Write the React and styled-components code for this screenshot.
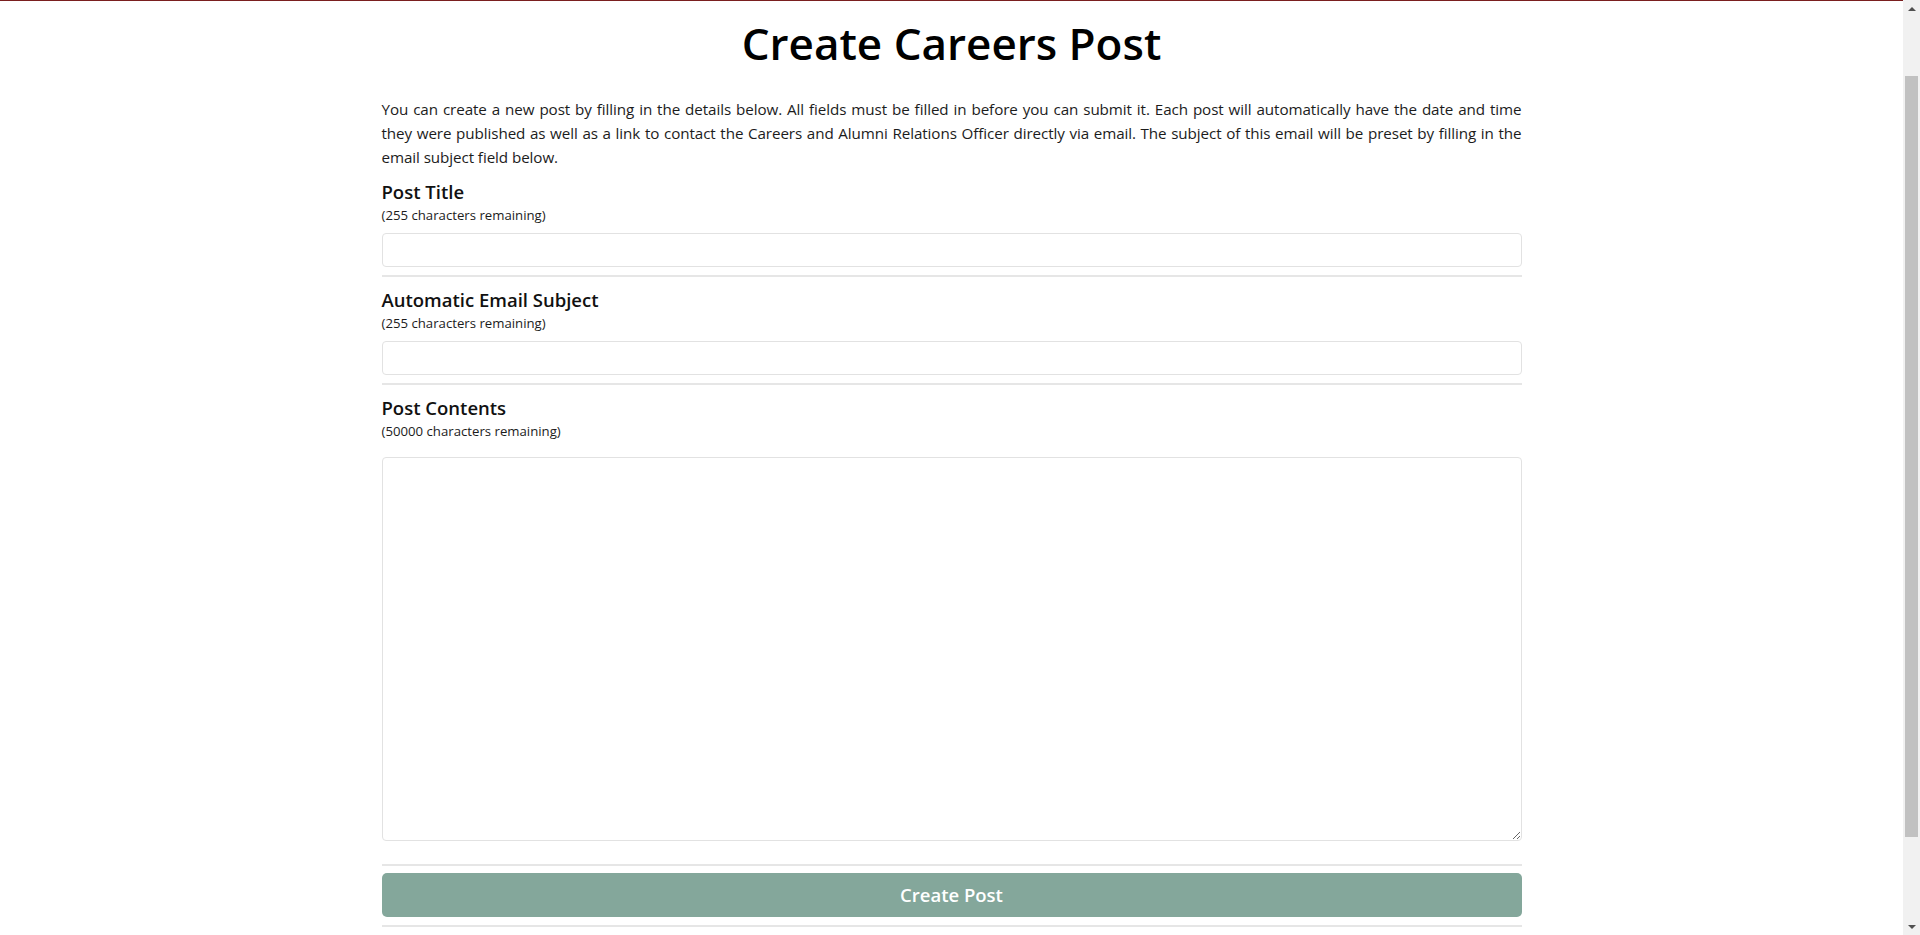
import React from "react";
import styled, { createGlobalStyle } from "styled-components";

const GlobalStyle = createGlobalStyle`
  html, body { margin: 0; padding: 0; background: #ffffff; }
  body {
    margin-right: 17px;
    font-family: "Open Sans", "Noto Sans", "Liberation Sans", sans-serif;
    color: #212529;
  }
  *, *::before, *::after { box-sizing: border-box; }
`;

const NavEdge = styled.div`
  height: 1px;
  background: #7a1f1f;
`;

const Container = styled.main`
  width: 1140px;
  margin: 0 auto;
  padding-bottom: 108px;
  display: flex;
  flex-direction: column;
`;

const Title = styled.h1`
  margin: 16px 0 0;
  font-size: 44px;
  line-height: 1.2;
  font-weight: 600;
  color: #000;
  text-align: center;
`;

const Intro = styled.p`
  margin: 27px 0 0;
  font-size: 15.2px;
  letter-spacing: -0.08px;
  line-height: 24px;
  text-align: justify;
  color: #1c1c1c;
`;

const Section = styled.section`
  display: flex;
  flex-direction: column;
  padding-top: 12px;
`;

const Label = styled.label`
  font-size: 18.5px;
  line-height: 1.2;
  font-weight: 600;
  color: #111;
`;

const Hint = styled.small`
  margin-top: 3px;
  font-size: 13.2px;
  line-height: 1.5;
  color: #1c1c1c;
`;

const TextInput = styled.input`
  margin-top: 7px;
  height: 34px;
  width: 100%;
  border: 1px solid #e2e2e2;
  border-radius: 4px;
  padding: 4px 10px;
  font-family: inherit;
  font-size: 15px;
  outline: none;
`;

const TextArea = styled.textarea`
  display: block;
  margin-top: 15px;
  height: 384px;
  width: 100%;
  border: 1px solid #e2e2e2;
  border-radius: 4px;
  padding: 6px 10px;
  font-family: inherit;
  font-size: 15px;
  outline: none;
`;

const Divider = styled.hr`
  margin: ${(p) => p.$top || 8}px 0 0;
  height: 2px;
  border: none;
  background: #e6e6e6;
`;

const SubmitButton = styled.button`
  margin-top: 7px;
  height: 44px;
  width: 100%;
  border: none;
  border-radius: 5px;
  background: #84a79b;
  color: #fff;
  font-family: inherit;
  font-size: 18.5px;
  font-weight: 600;
  cursor: pointer;
`;

/* Window scrollbar (classic style), drawn over the page's right edge */
const ScrollTrack = styled.div`
  position: fixed;
  top: 0;
  right: 0;
  width: 17px;
  height: 100vh;
  background: #f1f1f1;
  display: flex;
  flex-direction: column;
  align-items: center;
`;

const ScrollArrow = styled.div`
  height: 17px;
  width: 100%;
  display: flex;
  align-items: center;
  justify-content: center;
  &::before {
    content: "";
    border-left: 4px solid transparent;
    border-right: 4px solid transparent;
    ${(p) =>
      p.$down
        ? "border-top: 4px solid #505050;"
        : "border-bottom: 4px solid #505050;"}
  }
`;

const ScrollSpace = styled.div`
  flex: 1;
  width: 100%;
  display: flex;
  justify-content: center;
  padding-top: 59px;
  padding-bottom: 81px;
`;

const ScrollThumb = styled.div`
  width: 13px;
  height: 100%;
  background: #c1c1c1;
`;

const fields = [
  { id: "title", label: "Post Title", remaining: 255 },
  { id: "subject", label: "Automatic Email Subject", remaining: 255 },
];

export default function App() {
  return (
    <>
      <GlobalStyle />
      <NavEdge />
      <Container>
        <Title>Create Careers Post</Title>
        <Intro>
          You can create a new post by filling in the details below. All fields must be filled in
          before you can submit it. Each post will automatically have the date and time they were
          published as well as a link to contact the Careers and Alumni Relations Officer directly
          via email. The subject of this email will be preset by filling in the email subject field
          below.
        </Intro>
        {fields.map((f) => (
          <Section key={f.id}>
            <Label htmlFor={f.id}>{f.label}</Label>
            <Hint>({f.remaining} characters remaining)</Hint>
            <TextInput id={f.id} type="text" maxLength={255} />
            <Divider />
          </Section>
        ))}
        <Section>
          <Label htmlFor="contents">Post Contents</Label>
          <Hint>(50000 characters remaining)</Hint>
          <TextArea id="contents" maxLength={50000} />
          <Divider $top={23} />
        </Section>
        <SubmitButton type="button">Create Post</SubmitButton>
        <Divider />
      </Container>
      <ScrollTrack aria-hidden="true">
        <ScrollArrow />
        <ScrollSpace>
          <ScrollThumb />
        </ScrollSpace>
        <ScrollArrow $down />
      </ScrollTrack>
    </>
  );
}
